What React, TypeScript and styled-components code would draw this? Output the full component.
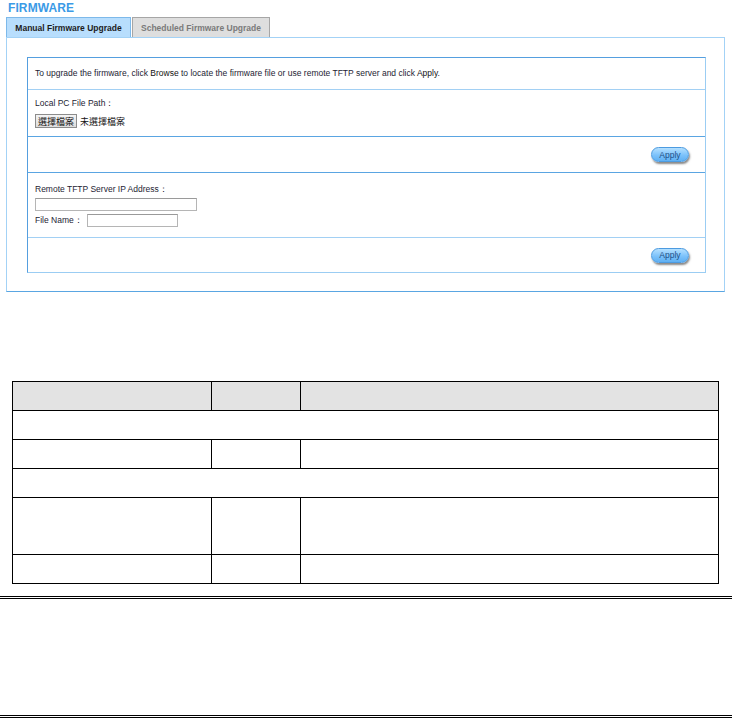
import React from 'react'
import styled, { createGlobalStyle } from 'styled-components'

const GlobalStyle = createGlobalStyle`
  html, body {
    margin: 0;
    padding: 0;
    background: #ffffff;
  }
  body {
    font-family: 'Liberation Sans', Arial, sans-serif;
    color: #222;
  }
`

const Page = styled.div`
  width: 732px;
  height: 718px;
  display: flex;
  flex-direction: column;
  overflow: hidden;
`

const Screen = styled.div`
  display: flex;
  flex-direction: column;
  padding: 1px 0 0 6px;
  width: 720px;
`

const Title = styled.h1`
  margin: 0 0 0 2px;
  height: 16px;
  line-height: 14px;
  font-size: 12px;
  font-weight: bold;
  color: #3b9ae6;
  letter-spacing: 0.1px;
`

const TabBar = styled.div`
  display: flex;
  height: 20px;
`

const Tab = styled.div<{ $active?: boolean }>`
  display: flex;
  align-items: center;
  justify-content: center;
  box-sizing: border-box;
  height: 20px;
  width: ${(p) => (p.$active ? '125px' : '138px')};
  margin-left: ${(p) => (p.$active ? '0' : '1px')};
  font-size: 8.5px;
  font-weight: bold;
  color: ${(p) => (p.$active ? '#1c1c1c' : '#7a7a7a')};
  background: ${(p) => (p.$active ? '#b8defd' : '#dedede')};
  border: 1px solid ${(p) => (p.$active ? '#7db9ea' : '#a6a6a6')};
  border-bottom: none;
`

const Panel = styled.div`
  box-sizing: border-box;
  width: 719px;
  height: 255px;
  padding: 19px 19px 0 20px;
  border: 1px solid #a3d2f6;
  border-bottom-color: #5aa6e2;
`

const Box = styled.div`
  box-sizing: border-box;
  width: 679px;
  border: 1px solid #559fdf;
  border-right-color: #9bcdf3;
  border-bottom-color: #9bcdf3;
`

const Row = styled.div<{ $h: number; $light?: boolean; $right?: boolean }>`
  box-sizing: border-box;
  height: ${(p) => p.$h}px;
  display: flex;
  flex-direction: column;
  justify-content: center;
  align-items: ${(p) => (p.$right ? 'flex-end' : 'flex-start')};
  padding: 0 16px 0 7px;
  border-top: 1px solid ${(p) => (p.$light ? '#a2d0f4' : '#5aa5e2')};
  font-size: 8.5px;
  &:first-child {
    border-top: none;
  }
`

const Text = styled.div`
  font-size: 8.5px;
  line-height: 11px;
  color: #241d33;
`

const Strong = styled.span`
  color: #111;
`

const FileLine = styled.div`
  display: flex;
  align-items: center;
  gap: 3px;
  margin-top: 5px;
`

const BrowseButton = styled.div`
  box-sizing: border-box;
  height: 14px;
  padding: 0 2px;
  display: flex;
  align-items: center;
  font-family: 'Noto Sans CJK TC', sans-serif;
  font-size: 9px;
  color: #111;
  background: linear-gradient(#f4f4f4, #dcdcdc);
  border: 1px solid #8c8c8c;
`

const CjkText = styled.span`
  font-family: 'Noto Sans CJK TC', sans-serif;
  font-size: 9px;
  color: #111;
`

const TextInput = styled.div<{ $w: number }>`
  box-sizing: border-box;
  width: ${(p) => p.$w}px;
  height: 13px;
  border: 1px solid #b5b5b5;
  border-top-color: #9a9a9a;
  background: #fff;
`

const FieldLine = styled.div`
  display: flex;
  align-items: center;
  gap: 4px;
  margin-top: 3px;
`

const ApplyButton = styled.div`
  box-sizing: border-box;
  width: 38px;
  height: 15px;
  border-radius: 8px;
  display: flex;
  align-items: center;
  justify-content: center;
  font-size: 8.5px;
  color: #1f4f86;
  background: linear-gradient(#b4e0ff, #7cc2fb 55%, #5fb0f3);
  border: 1px solid #4d9be0;
  box-shadow: 1px 2px 2px rgba(40, 40, 40, 0.55);
`

const Spec = styled.table`
  margin: 89px 0 0 12px;
  width: 707px;
  border-collapse: collapse;
  table-layout: fixed;
`

const Cell = styled.td<{ $h?: number; $head?: boolean }>`
  height: ${(p) => (p.$h ? p.$h : 28)}px;
  padding: 0;
  border: 1.5px solid #000;
  background: ${(p) => (p.$head ? '#e3e3e3' : '#fff')};
`

const Rule = styled.div<{ $top: number }>`
  margin-top: ${(p) => p.$top}px;
  width: 732px;
  height: 1px;
  border-top: 1px solid #000;
  border-bottom: 1px solid #000;
  flex-shrink: 0;
`

export default function App() {
  return (
    <Page>
      <GlobalStyle />
      <Screen>
        <Title>FIRMWARE</Title>
        <TabBar>
          <Tab $active>Manual Firmware Upgrade</Tab>
          <Tab>Scheduled Firmware Upgrade</Tab>
        </TabBar>
        <Panel>
          <Box>
            <Row $h={31}>
              <Text>
                To upgrade the firmware, click <Strong>Browse</Strong> to locate
                the firmware file or use remote TFTP server and click{' '}
                <Strong>Apply</Strong>.
              </Text>
            </Row>
            <Row $h={47} $light>
              <Text>Local PC File Path：</Text>
              <FileLine>
                <BrowseButton>選擇檔案</BrowseButton>
                <CjkText>未選擇檔案</CjkText>
              </FileLine>
            </Row>
            <Row $h={36} $right>
              <ApplyButton>Apply</ApplyButton>
            </Row>
            <Row $h={65}>
              <Text>Remote TFTP Server IP Address：</Text>
              <FieldLine>
                <TextInput $w={162} />
              </FieldLine>
              <FieldLine>
                <Text>File Name：</Text>
                <TextInput $w={91} />
              </FieldLine>
            </Row>
            <Row $h={35} $light $right>
              <ApplyButton>Apply</ApplyButton>
            </Row>
          </Box>
        </Panel>
      </Screen>
      <Spec>
        <colgroup>
          <col style={{ width: 199 }} />
          <col style={{ width: 89 }} />
          <col />
        </colgroup>
        <tbody>
          <tr>
            <Cell $head />
            <Cell $head />
            <Cell $head />
          </tr>
          <tr>
            <Cell colSpan={3} />
          </tr>
          <tr>
            <Cell />
            <Cell />
            <Cell />
          </tr>
          <tr>
            <Cell colSpan={3} />
          </tr>
          <tr>
            <Cell $h={56} />
            <Cell $h={56} />
            <Cell $h={56} />
          </tr>
          <tr>
            <Cell />
            <Cell />
            <Cell />
          </tr>
        </tbody>
      </Spec>
      <Rule $top={12} />
      <Rule $top={116} />
    </Page>
  )
}
